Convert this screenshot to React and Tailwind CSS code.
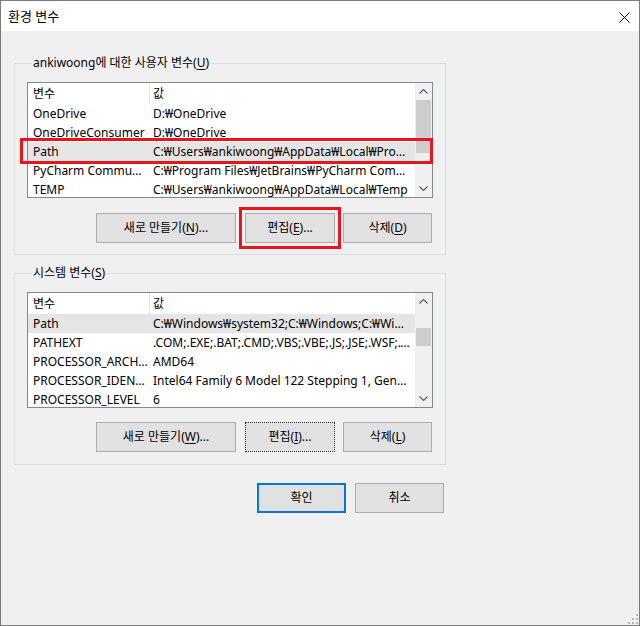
import React from 'react';

// Environment variables dialog (Korean Windows 10 look)

const userVars = [
  { name: 'OneDrive', value: 'D:₩OneDrive' },
  { name: 'OneDriveConsumer', value: 'D:₩OneDrive' },
  { name: 'Path', value: 'C:₩Users₩ankiwoong₩AppData₩Local₩Programs₩Microsoft VS Code₩bin', selected: true },
  { name: 'PyCharm Community Edition', value: 'C:₩Program Files₩JetBrains₩PyCharm Community Edition 2020.1₩bin;' },
  { name: 'TEMP', value: 'C:₩Users₩ankiwoong₩AppData₩Local₩Temp' },
];

const systemVars = [
  { name: 'Path', value: 'C:₩Windows₩system32;C:₩Windows;C:₩Windows₩System32₩Wbem;', selected: true },
  { name: 'PATHEXT', value: '.COM;.EXE;.BAT;.CMD;.VBS;.VBE;.JS;.JSE;.WSF;.WSH;.MSC' },
  { name: 'PROCESSOR_ARCHITECTURE', value: 'AMD64' },
  { name: 'PROCESSOR_IDENTIFIER', value: 'Intel64 Family 6 Model 122 Stepping 1, GenuineIntel' },
  { name: 'PROCESSOR_LEVEL', value: '6' },
];

function Key({ children }) {
  return <span className="underline underline-offset-2 decoration-1">{children}</span>;
}

function Chevron({ down }) {
  return (
    <svg width="9" height="5" viewBox="0 0 9 5">
      <path
        d={down ? 'M0.5 0.5 L4.5 4.5 L8.5 0.5' : 'M0.5 4.5 L4.5 0.5 L8.5 4.5'}
        fill="none"
        stroke="#606060"
        strokeWidth="1.2"
      />
    </svg>
  );
}

function VarList({ rows, thumbGap, thumbHeight, annotate }) {
  return (
    <div className="relative w-[406px] h-[116px] border border-[#828790] bg-white flex">
      <div className="flex-1 min-w-0 overflow-hidden">
        <div className="flex h-[21px]">
          <div className="w-[122px] pl-[5px] pt-[1px] flex items-center border-r border-[#e5e5e5]">변수</div>
          <div className="pl-[3px] pt-[1px] flex items-center">값</div>
        </div>
        {rows.map((r) => (
          <div key={r.name} className={`flex h-[19px] items-center pt-[1px] ${r.selected ? 'bg-[#e5e5e5]' : ''}`}>
            <div className="w-[122px] shrink-0 pl-[5px] pr-[2px] truncate">{r.name}</div>
            <div className="flex-1 min-w-0 pl-[3px] pr-[4px] truncate">{r.value}</div>
          </div>
        ))}
      </div>
      {/* vertical scrollbar */}
      <div className="w-[17px] shrink-0 bg-[#f0f0f0] flex flex-col items-center">
        <div className="h-[17px] w-full flex items-center justify-center">
          <Chevron />
        </div>
        <div className="w-[15px] bg-[#cdcdcd]" style={{ marginTop: thumbGap, height: thumbHeight }} />
        <div className="flex-1" />
        <div className="h-[17px] w-full flex items-center justify-center">
          <Chevron down />
        </div>
      </div>
      {annotate && (
        <div className="absolute left-[-8px] top-[55px] w-[413px] h-[26px] border-[3px] border-[#e8141e]" />
      )}
    </div>
  );
}

function Btn({ children, className = '' }) {
  return (
    <button className={`h-[30px] bg-[#e1e1e1] border border-[#adadad] flex items-center justify-center leading-none ${className}`}>
      {children}
    </button>
  );
}

export default function App() {
  return (
    <div className="relative w-[640px] h-[626px] flex flex-col border border-[#7a7a7a] bg-[#f0f0f0] text-[12px] text-black font-['Noto_Sans','Noto_Sans_CJK_KR',sans-serif]">
      {/* title bar */}
      <div className="h-[30px] shrink-0 bg-white flex items-center justify-between pl-[7px] pr-[9px] pt-[2px]">
        <span className="text-[13px]">환경 변수</span>
        <svg width="11" height="11" viewBox="0 0 11 11">
          <path d="M0.5 0.5 L10.5 10.5 M10.5 0.5 L0.5 10.5" stroke="#000" strokeWidth="1" />
        </svg>
      </div>

      <div className="pl-[13px] pt-[24px]">
        {/* user variables */}
        <fieldset className="w-[432px] border border-[#dcdcdc] pl-[12px] pt-[11px] pb-[11px]">
          <legend className="ml-[5px] px-[1px] leading-[16px]">
            ankiwoong에 대한 사용자 변수(<Key>U</Key>)
          </legend>
          <VarList rows={userVars} thumbGap={0} thumbHeight={53} annotate />
          <div className="flex mt-[15px] ml-[69px]">
            <Btn className="w-[140px]">새로 만들기(<Key>N</Key>)...</Btn>
            <Btn className="w-[90px] ml-[9px] outline-[3px] outline-solid outline-[#e8141e] outline-offset-[3px]">
              편집(<Key>E</Key>)...
            </Btn>
            <Btn className="w-[89px] ml-[8px]">삭제(<Key>D</Key>)</Btn>
          </div>
        </fieldset>

        {/* system variables */}
        <fieldset className="w-[432px] mt-[10px] border border-[#dcdcdc] pl-[12px] pt-[11px] pb-[12px]">
          <legend className="ml-[5px] px-[1px] leading-[16px]">
            시스템 변수(<Key>S</Key>)
          </legend>
          <VarList rows={systemVars} thumbGap={18} thumbHeight={18} />
          <div className="flex mt-[14px] ml-[69px]">
            <Btn className="w-[140px]">새로 만들기(<Key>W</Key>)...</Btn>
            <Btn className="w-[90px] ml-[9px] !border-dotted !border-[#333]">편집(<Key>I</Key>)...</Btn>
            <Btn className="w-[89px] ml-[8px]">삭제(<Key>L</Key>)</Btn>
          </div>
        </fieldset>

        {/* dialog buttons */}
        <div className="flex mt-[18px] ml-[243px]">
          <button className="w-[89px] h-[30px] bg-[#e1e1e1] border-2 border-[#0078d7]">확인</button>
          <button className="w-[89px] h-[30px] ml-[9px] bg-[#e1e1e1] border border-[#adadad]">취소</button>
        </div>
      </div>

      {/* size grip */}
      <svg className="absolute right-[1px] bottom-[1px]" width="10" height="10" viewBox="0 0 10 10">
        <g fill="#b8b8b8">
          <rect x="8" y="0" width="2" height="2" />
          <rect x="4" y="4" width="2" height="2" />
          <rect x="8" y="4" width="2" height="2" />
          <rect x="0" y="8" width="2" height="2" />
          <rect x="4" y="8" width="2" height="2" />
          <rect x="8" y="8" width="2" height="2" />
        </g>
      </svg>
    </div>
  );
}
